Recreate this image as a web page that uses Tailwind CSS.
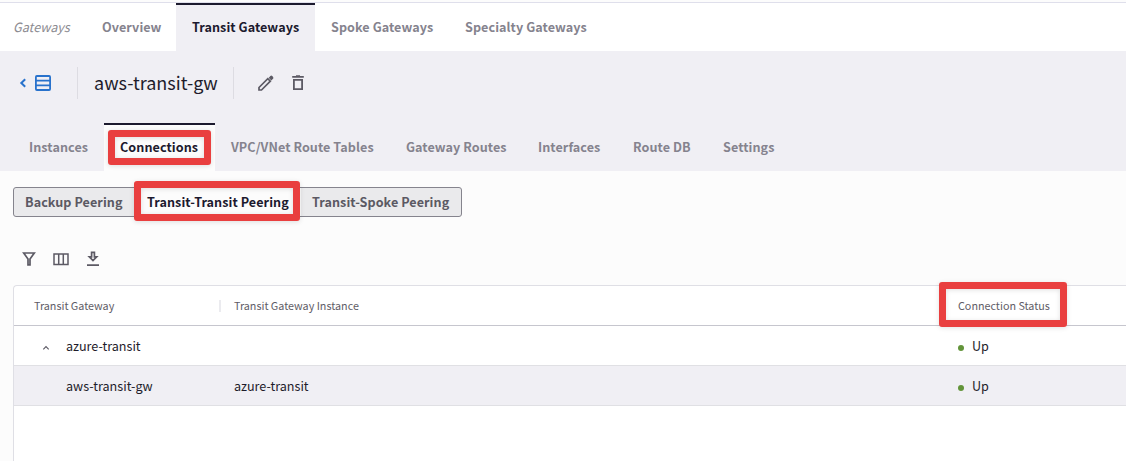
<!DOCTYPE html>
<html lang="en">
<head>
<meta charset="utf-8">
<title>Transit Gateways</title>
<script src="https://cdn.jsdelivr.net/npm/@tailwindcss/browser@4"></script>
</head>
<body class="h-[461px] w-[1126px] overflow-hidden bg-[#fcfcfc] font-['Noto_Sans_CJK_SC','Noto_Sans',sans-serif] text-[12.6px] leading-5 text-[#1e1c2b] whitespace-nowrap">
<div class="flex h-[461px] flex-col">
  <nav class="mt-0.5 flex h-[49px] shrink-0 border-t border-[#dfdfeb] bg-white tracking-[0.06px] font-bold text-[#85838e]">
    <div class="w-[86px] pt-3.5 pl-[13px] tracking-normal font-normal italic text-[#8c8b91]">Gateways</div>
    <a class="w-[90px] pt-3.5 pl-4">Overview</a>
    <a class="w-[139px] border-t-2 border-[#1c1a2e] bg-[#f0eff4] pt-3 pl-4 text-[#1c1a2e]">Transit Gateways</a>
    <a class="w-[134px] pt-3.5 pl-4">Spoke Gateways</a>
    <a class="pt-3.5 pl-4">Specialty Gateways</a>
  </nav>

  <header class="flex h-[120px] shrink-0 flex-col justify-between bg-[#f0eff4]">
    <div class="flex h-16 items-center">
      <svg class="ml-[19px] h-4 w-8" viewBox="0 0 32 16" fill="none" stroke="#2872cc">
        <path d="M6.200 4.200 2.300 8l3.900 3.800" stroke-width="2"/>
        <rect x="16.900" y="1" width="14.200" height="14" rx="1" stroke-width="1.800"/>
        <path d="M17 5.600h14M17 10.400h14" stroke-width="1.600"/>
      </svg>
      <div class="ml-[26px] h-8 w-px bg-[#dddce2]"></div>
      <h1 class="w-[155px] pb-0.5 pl-4 text-[18px] leading-7">aws-transit-gw</h1>
      <div class="h-8 w-px bg-[#dddce2]"></div>
      <svg class="ml-6 h-4 w-4" viewBox="0 0 16 16" fill="none" stroke="#5c5a64" stroke-width="1.700">
        <path d="M1 15v-2.500L9.800 3.700l2.500 2.500L3.500 15Z"/>
        <path d="m11.500 2.800 1.300-1.300q.500-.5 1 0l.8.800q.5.500 0 1l-1.300 1.300Z" fill="#5c5a64" stroke-width="1.200"/>
      </svg>
      <svg class="ml-4 h-4 w-4" viewBox="0 0 16 16" fill="none" stroke="#5c5a64" stroke-width="1.800">
        <path d="M2.200 1.900h11.600M6 1.100h4M3.900 4.900h8.200v9.300H3.900Z"/>
      </svg>
    </div>
    <nav class="flex h-12 tracking-[0.06px] font-bold text-[#85838e]">
      <a class="w-[104px] pt-3.5 pl-[29px]">Instances</a>
      <a class="relative w-[111px] border-t-2 border-[#1c1a2e] bg-[#fcfcfc] pt-3 pl-4 text-[#1c1a2e]">
        <span class="absolute top-[4.500px] left-1 h-[35.500px] w-[103px] rounded-[3px] border-[7px] border-[#e93f3f] shadow-[0_1px_5px_rgba(0,0,0,0.12),inset_0_1px_5px_rgba(0,0,0,0.12)]"></span>
        <span class="relative">Connections</span>
      </a>
      <a class="w-[175px] pt-3.5 pl-4">VPC/VNet Route Tables</a>
      <a class="w-[132px] pt-3.5 pl-4">Gateway Routes</a>
      <a class="w-[95px] pt-3.5 pl-4">Interfaces</a>
      <a class="w-[90px] pt-3.5 pl-4">Route DB</a>
      <a class="pt-3.5 pl-4">Settings</a>
    </nav>
  </header>

  <main class="flex grow flex-col pl-[13px]">
    <div class="mt-4 flex h-[30px] w-[449px] shrink-0 rounded-[3px] border border-[#85848d] bg-[#eaeaec] tracking-[0.06px] font-bold text-[#5b5963]">
      <div class="w-[122px] pt-1 pl-[11px]">Backup Peering</div>
      <div class="relative w-[165px] bg-[#fcfcfc] pt-1 pl-[11px] text-[#1c1a2e]">
        <span class="absolute -top-[7px] -left-0.5 h-10 w-[166px] rounded-[3px] border-[7px] border-[#e93f3f] shadow-[0_1px_5px_rgba(0,0,0,0.12),inset_0_1px_5px_rgba(0,0,0,0.12)]"></span>
        <span class="relative">Transit-Transit Peering</span>
      </div>
      <div class="pt-1 pl-[11px]">Transit-Spoke Peering</div>
    </div>

    <div class="mt-[34px] flex shrink-0 gap-4 pl-2">
      <svg class="h-4 w-4" viewBox="0 0 16 16" fill="none" stroke="#5c5a64" stroke-width="1.700">
        <path d="M2.700 2h10.600L9 8v5.800H7V8Z"/>
      </svg>
      <svg class="h-4 w-4" viewBox="0 0 16 16" fill="none" stroke="#5c5a64" stroke-width="1.500">
        <path d="M1 2.900h14v10.600H1ZM5.700 2.900v10.600M10.300 2.900v10.600"/>
      </svg>
      <svg class="h-4 w-4" viewBox="0 0 16 16" fill="none" stroke="#5c5a64" stroke-width="1.700">
        <path d="M6.600 1.300h2.800v4.500h2.300L8 9.600 4.300 5.800h2.300ZM2 14.200h12"/>
      </svg>
    </div>

    <section class="mt-[18px] grow rounded-tl-[4px] border-t border-l border-[#dfdfe5] bg-white">
      <div class="relative flex h-10 items-center border-b border-[#c6c6ce] text-[10.770px] text-[#5f5d67]">
        <div class="w-[205px] pl-5">Transit Gateway</div>
        <div class="h-3 w-0.5 bg-[#ebebef]"></div>
        <div class="w-[737px] pl-[13px]">Transit Gateway Instance</div>
        <div>
          <span class="absolute -top-1 left-[925px] h-[45px] w-[128px] rounded-[3px] border-[7px] border-[#e93f3f] shadow-[0_1px_5px_rgba(0,0,0,0.12),inset_0_1px_5px_rgba(0,0,0,0.12)]"></span>
          <span class="relative">Connection Status</span>
        </div>
      </div>
      <div class="flex h-10 items-center border-b border-[#e0e0e4]">
        <svg class="mt-0.5 ml-7 h-2 w-2" viewBox="0 0 8 8" fill="none" stroke="#5c5a64" stroke-width="1.100"><path d="m1.300 6.300 2.700-2.700 2.700 2.700"/></svg>
        <div class="w-[908px] pl-4">azure-transit</div>
        <i class="mt-1 h-1.5 w-1.5 rounded-full bg-[#62943a]"></i>
        <div class="pl-2">Up</div>
      </div>
      <div class="flex h-10 items-center border-b border-[#e0e0e4] bg-[#f0eff4]">
        <div class="w-[220px] pl-[52px]">aws-transit-gw</div>
        <div class="w-[724px]">azure-transit</div>
        <i class="mt-1 h-1.5 w-1.5 rounded-full bg-[#62943a]"></i>
        <div class="pl-2">Up</div>
      </div>
    </section>
  </main>
</div>
</body>
</html>
